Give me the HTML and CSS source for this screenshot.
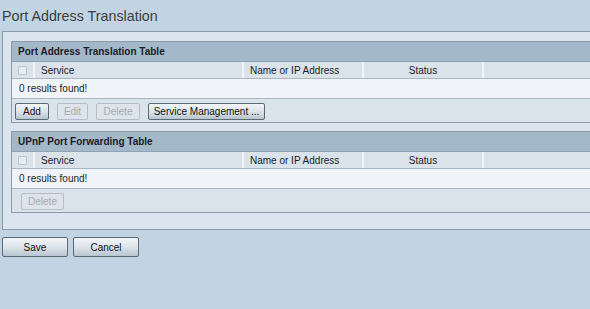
FILE: index.html
```html
<!DOCTYPE html>
<html lang="en">
<head>
    <meta charset="UTF-8">
    <title>Port Address Translation</title>
    <link rel="stylesheet" href="styles.css">
</head>
<body>
    <h1 class="page-title">Port Address Translation</h1>

    <div class="panel">
        <div class="grid">
            <div class="grid-title">Port Address Translation Table</div>
            <div class="grid-head">
                <div class="cell cell-check"><span class="check"></span></div>
                <div class="cell cell-service">Service</div>
                <div class="cell cell-name">Name or IP Address</div>
                <div class="cell cell-status">Status</div>
                <div class="cell cell-rest"></div>
            </div>
            <div class="grid-empty">0 results found!</div>
            <div class="grid-actions">
                <button class="btn btn-add">Add</button>
                <button class="btn btn-edit" disabled>Edit</button>
                <button class="btn btn-delete" disabled>Delete</button>
                <button class="btn btn-services">Service Management ...</button>
            </div>
        </div>

        <div class="grid grid-upnp">
            <div class="grid-title">UPnP Port Forwarding Table</div>
            <div class="grid-head">
                <div class="cell cell-check"><span class="check"></span></div>
                <div class="cell cell-service">Service</div>
                <div class="cell cell-name">Name or IP Address</div>
                <div class="cell cell-status">Status</div>
                <div class="cell cell-rest"></div>
            </div>
            <div class="grid-empty">0 results found!</div>
            <div class="grid-actions wide">
                <button class="btn btn-delete" disabled>Delete</button>
            </div>
        </div>
    </div>

    <div class="page-actions">
        <button class="btn btn-big">Save</button>
        <button class="btn btn-big">Cancel</button>
    </div>
</body>
</html>
```

FILE: styles.css
```css
html, body {
    overflow: hidden;
}
body {
    margin: 0;
    background-color: #c2d4e4;
    font-family: "Liberation Sans", Arial, sans-serif;
    font-size: 10px;
    color: #1c1c28;
}
* {
    box-sizing: border-box;
}
.page-title {
    margin: 0;
    height: 31px;
    padding: 8px 0 0 2px;
    font-size: 14.3px;
    line-height: 16px;
    font-weight: normal;
    color: #3d3d3d;
}
.panel {
    width: 660px;
    margin-left: 2px;
    border: 1px solid #8a9aa6;
    background: #dae5ef;
    padding: 9px 0 16px 8px;
}
.grid {
    border: 1px solid #8a9aa6;
    background: #dae2ea;
}
.grid-upnp {
    margin-top: 8px;
}
.grid-title {
    height: 20px;
    line-height: 20px;
    padding-left: 6px;
    background: #a3b8c8;
    border-bottom: 1px solid #8fa3b3;
    font-weight: bold;
    overflow: hidden;
}
.grid-head {
    display: flex;
    height: 17px;
    line-height: 17px;
    background: #dae2ea;
    border-bottom: 1px solid #a9b6c1;
    overflow: hidden;
}
.cell {
    border-right: 2px solid #f2f5f8;
    padding-left: 6px;
}
.cell-check {
    width: 23px;
    padding-left: 6px;
    display: flex;
    align-items: center;
}
.check {
    width: 9px;
    height: 9px;
    border: 1px solid #b9c3cc;
    border-radius: 1px;
    background: #e7ecf1;
}
.cell-service {
    width: 209px;
}
.cell-name {
    width: 120px;
}
.cell-status {
    width: 120px;
    padding-left: 0;
    text-align: center;
}
.cell-rest {
    flex: 1;
    border-right: none;
}
.grid-empty {
    height: 20px;
    line-height: 18px;
    padding: 1px 0 0 7px;
    background: #f0f4f8;
    border-bottom: 1px solid #a9b6c1;
}
.grid-actions {
    display: flex;
    gap: 8px;
    height: 23px;
    padding: 4px 0 0 3px;
}
.grid-actions.wide {
    padding-left: 9px;
}
.btn {
    height: 17px;
    padding: 0;
    font-family: inherit;
    font-size: 10px;
    color: #111;
    border: 1px solid #5c6a75;
    border-radius: 2px;
    background: linear-gradient(#f2f5f8, #dde4ea 50%, #b8c5d0);
}
.btn:disabled {
    color: #a3abb4;
    border-color: #b3bec8;
    background: #dde4ea;
}
.btn-add {
    width: 34px;
}
.btn-edit {
    width: 31px;
}
.btn-delete {
    width: 44px;
}
.grid-actions.wide .btn-delete {
    width: 43px;
}
.btn-services {
    width: 117px;
}
.page-actions {
    display: flex;
    gap: 5px;
    padding: 7px 0 0 2px;
}
.btn-big {
    width: 66px;
    height: 20px;
}
```
